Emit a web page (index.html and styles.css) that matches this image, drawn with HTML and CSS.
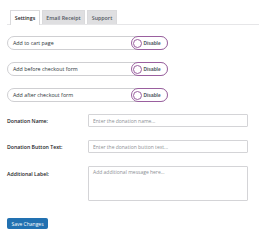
FILE: index.html
```html
<!DOCTYPE html>
<html>
<head>
<meta charset="utf-8"/>
<link rel="stylesheet" href="styles.css">
<title>Donation Settings</title>
</head>
<body>
<div class="wrap">
  <div class="nav-tabs">
    <a class="nav-tab active">Settings</a>
    <a class="nav-tab">Email Receipt</a>
    <a class="nav-tab">Support</a>
  </div>

  <div class="switch-list">
    <div class="switch-row">
      <span>Add to cart page</span>
      <span class="toggle"><span class="knob"></span>Disable</span>
    </div>
    <div class="switch-row">
      <span>Add before checkout form</span>
      <span class="toggle"><span class="knob"></span>Disable</span>
    </div>
    <div class="switch-row">
      <span>Add after checkout form</span>
      <span class="toggle"><span class="knob"></span>Disable</span>
    </div>
  </div>

  <div class="form-table">
    <label class="label">Donation Name:</label>
    <input class="field" type="text" placeholder="Enter the donation name...">
    <label class="label">Donation Button Text:</label>
    <input class="field" type="text" placeholder="Enter the donation button text...">
    <label class="label label-top">Additional Label:</label>
    <textarea class="field area" placeholder="Add additional message here..."></textarea>
  </div>

  <button class="button-primary">Save Changes</button>
</div>
</body>
</html>
```

FILE: styles.css
```css
body {
  margin: 0;
  background-color: #ffffff;
  font-family: "Open Sans", "Noto Sans", sans-serif;
  color: #1d2327;
}

.wrap {
  padding: 10px 0 0 7px;
}

.nav-tabs {
  display: flex;
  gap: 2px;
  height: 14px;
  padding-left: 3px;
  border-bottom: 1px solid #e6e6e8;
}

.nav-tab {
  display: flex;
  align-items: center;
  justify-content: center;
  height: 14px;
  box-sizing: border-box;
  border: 1px solid #dadadc;
  border-bottom: none;
  background-color: #dfdfe1;
  color: #50575e;
  font-size: 5.3px;
  font-weight: 600;
}
.nav-tab:nth-child(1) {width: 30px;}
.nav-tab:nth-child(2) {width: 43px;}
.nav-tab:nth-child(3) {width: 30px;}
.nav-tab.active {
  background-color: #ffffff;
  color: #1d2327;
  height: 15px;
  margin-bottom: -1px;
}

.switch-list {
  display: flex;
  flex-direction: column;
  gap: 12px;
  margin-top: 11px;
}

.switch-row {
  display: flex;
  align-items: center;
  justify-content: space-between;
  width: 161px;
  height: 14px;
  box-sizing: border-box;
  border: 1px solid #cfcfd2;
  border-radius: 7px;
  padding-left: 5px;
  font-size: 5.3px;
  color: #2c3338;
}

.toggle {
  display: flex;
  align-items: center;
  gap: 1.5px;
  width: 37px;
  height: 14px;
  box-sizing: border-box;
  margin-right: -1px;
  border: 1.5px solid #9a609f;
  border-radius: 7px;
  background-color: #ffffff;
  padding-left: 1px;
  font-family: "Liberation Sans", sans-serif;
  font-size: 4.8px;
  font-weight: 600;
  color: #50575e;
}

.knob {
  width: 9px;
  height: 9px;
  box-sizing: border-box;
  border: 1.2px solid #9a609f;
  border-radius: 50%;
}

.form-table {
  display: grid;
  grid-template-columns: 81px 160px;
  row-gap: 13px;
  margin-top: 12px;
  align-items: center;
}

.label {
  font-size: 5.2px;
  font-weight: 600;
  color: #1d2327;
}
.label-top {
  align-self: start;
  padding-top: 4px;
}

.field {
  width: 160px;
  height: 13px;
  box-sizing: border-box;
  margin: 0;
  border: 1px solid #d4d4d7;
  border-radius: 1px;
  padding: 0 4px;
  font-family: "Open Sans", "Noto Sans", sans-serif;
  font-size: 5px;
}
.field::placeholder {
  color: #8c8f94;
}
.area {
  height: 35px;
  padding: 2px 4px;
  resize: none;
}

.button-primary {
  display: block;
  margin-top: 17px;
  width: 41px;
  height: 11px;
  padding: 0;
  border: 1px solid #2271b1;
  border-radius: 1.5px;
  background-color: #2271b1;
  color: #ffffff;
  font-family: "Open Sans", "Noto Sans", sans-serif;
  font-size: 5px;
}
```
